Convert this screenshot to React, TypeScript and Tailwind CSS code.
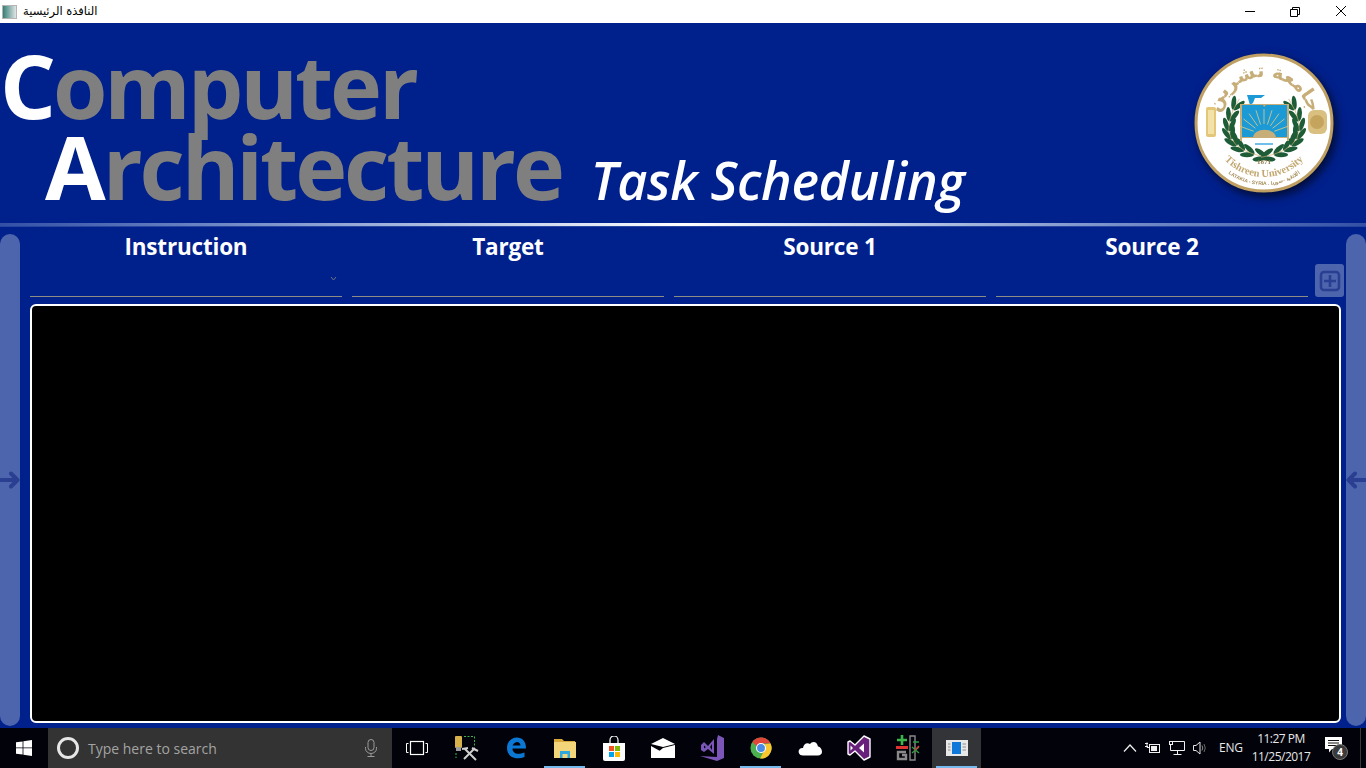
import React from "react";

const ui = { fontFamily: '"Open Sans", "Noto Sans", sans-serif' };

function branch(side: number) {
  const pts: { x: number; y: number; r: number }[] = [];
  const n = 8;
  for (let i = 0; i < n; i++) {
    const t = i / (n - 1);
    const x0 = 3, y0 = 33, cx = 50, cy = 22, x1 = 28, y1 = -18;
    const x = (1 - t) * (1 - t) * x0 + 2 * (1 - t) * t * cx + t * t * x1;
    const y = (1 - t) * (1 - t) * y0 + 2 * (1 - t) * t * cy + t * t * y1;
    const dx = 2 * (1 - t) * (cx - x0) + 2 * t * (x1 - cx);
    const dy = 2 * (1 - t) * (cy - y0) + 2 * t * (y1 - cy);
    pts.push({ x: 73 + side * x, y: 73 + y, r: (Math.atan2(dy, side * dx) * 180) / Math.PI });
  }
  return pts;
}

function Laurel({ side }: { side: number }) {
  return (
    <g>
      {branch(side).map((p, i) => (
        <g key={i} transform={`translate(${p.x} ${p.y}) rotate(${p.r})`}>
          <ellipse cx="2" cy="-2.5" rx="7" ry="2.4" transform="rotate(-22)" fill="#1d5c36" />
          <ellipse cx="2" cy="2.5" rx="7" ry="2.4" transform="rotate(22)" fill="#1d5c36" />
          <line x1="-6" y1="0" x2="7" y2="0" stroke="#c8ad72" strokeWidth="0.6" />
        </g>
      ))}
    </g>
  );
}

function Logo() {
  const rays = [-70, -52, -35, -18, 0, 18, 35, 52, 70];
  return (
    <svg width="146" height="146" viewBox="0 0 146 146" className="drop-shadow-[3px_4px_5px_rgba(0,0,0,0.65)]">
      <defs>
        <path id="arcTop" d="M27 73 A46 46 0 0 1 119 73" />
        <path id="arcBot" d="M19 73 A54 54 0 0 0 127 73" />
        <path id="arcBot2" d="M11 73 A62 62 0 0 0 135 73" />
      </defs>
      <circle cx="73" cy="73" r="68" fill="#fff" stroke="#bf9f62" strokeWidth="3" />
      <text fontFamily='"DejaVu Sans", sans-serif' fontSize="19" fontWeight="700" fill="#c7ad78">
        <textPath href="#arcTop" startOffset="50%" textAnchor="middle">جامعة تشرين</textPath>
      </text>
      <rect x="15" y="57" width="10" height="30" rx="2" fill="#e3c677" />
      <rect x="17" y="60" width="6" height="24" fill="#f3e2a8" />
      <rect x="117" y="60" width="19" height="24" rx="6" fill="#d9bf80" />
      <circle cx="126" cy="72" r="7" fill="#c5a55e" />
      <path d="M56 45 H74 L70 48 H64 L62 53 L59 55 Z" fill="#1b9ad6" />
      <Laurel side={-1} />
      <Laurel side={1} />
      <rect x="49" y="54" width="49" height="37" fill="#c7ad78" />
      <path d="M51 55 H72 L73 57 L75 55 H96 V87 H51 Z" fill="#1b9ad6" />
      <g stroke="#e9cc7d" strokeWidth="0.8">
        {rays.map((a) => (
          <line
            key={a}
            x1={73 + 11 * Math.sin((a * Math.PI) / 180)}
            y1={85 - 11 * Math.cos((a * Math.PI) / 180)}
            x2={73 + 26 * Math.sin((a * Math.PI) / 180)}
            y2={85 - 26 * Math.cos((a * Math.PI) / 180)}
          />
        ))}
      </g>
      <path d="M62 88 A11 8 0 0 1 85 88 Z" fill="#c7ad78" />
      <rect x="51" y="88" width="45" height="3" fill="#fff" />
      <rect x="64" y="93" width="18" height="2" fill="#6fbfe8" />
      <text x="73" y="114" textAnchor="middle" fontFamily='"Liberation Serif", serif' fontSize="7" fontWeight="700" fill="#8d7a4e">1871</text>
      <text fontFamily='"Liberation Serif", serif' fontSize="10.5" fontWeight="700" fill="#c2a871">
        <textPath href="#arcBot" startOffset="50%" textAnchor="middle">Tishreen University</textPath>
      </text>
      <text fontFamily='"Liberation Sans", sans-serif' fontSize="5" fontWeight="700" fill="#a58c58">
        <textPath href="#arcBot2" startOffset="50%" textAnchor="middle">LATAKIA - SYRIA . اللاذقية - سوريا</textPath>
      </text>
    </svg>
  );
}

function Field({ label, chevron }: { label: string; chevron?: boolean }) {
  return (
    <div className="w-[312px] flex flex-col">
      <div className="h-[26px] flex items-center justify-center text-white text-[22.5px] font-bold tracking-[-0.2px]">
        {label}
      </div>
      <div className="relative h-[37px] border-b border-[#8d8d85]">
        {chevron && (
          <svg width="7" height="5" viewBox="0 0 7 5" className="absolute right-[5px] top-[16px]">
            <path d="M1 1 L3.5 4 L6 1" fill="none" stroke="#6f7480" strokeWidth="1" />
          </svg>
        )}
      </div>
    </div>
  );
}

function Rail({ flip }: { flip?: boolean }) {
  return (
    <div className="w-5 shrink-0 bg-[#4d65ad] rounded-t-[10px] rounded-b-[10px] flex items-center justify-center">
      <svg width="20" height="20" viewBox="0 0 20 20" className={flip ? "rotate-180" : ""}>
        <path d="M-1 10 H17 M11 3.5 L17.5 10 L11 16.5" fill="none" stroke="#2a3f92" strokeWidth="4" strokeLinecap="round" strokeLinejoin="round" />
      </svg>
    </div>
  );
}

function TaskIcon({ children, underline, active }: { children: React.ReactNode; underline?: boolean; active?: boolean }) {
  return (
    <div className={`relative w-[49px] h-10 flex items-center justify-center ${active ? "bg-[#333438]" : ""}`}>
      {children}
      {underline && <div className="absolute left-1 right-1 bottom-0 h-0.5 bg-[#76b9ed]" />}
    </div>
  );
}

export default function App() {
  return (
    <div className="w-[1366px] h-[768px] overflow-hidden flex flex-col bg-[#00208c]" style={ui}>
      {/* title bar */}
      <div className="h-[23px] shrink-0 bg-white flex items-center">
        <div className="ml-[2px] w-[15px] h-[14px] bg-gradient-to-r from-[#2f7f78] to-[#dfe6e6] border border-[#b5b5b5]" />
        <span className="ml-[6px] text-[11.5px] text-black" style={{ fontFamily: '"DejaVu Sans", sans-serif' }} dir="rtl">
          النافذة الرئيسية
        </span>
        <div className="ml-auto pr-[2px] flex items-center text-black">
          <svg width="46" height="22" viewBox="0 0 46 22" className="-mr-px"><path d="M18 10.5 H28" stroke="#000" /></svg>
          <svg width="46" height="22" viewBox="0 0 46 22"><path d="M18.5 8.5 h7 v7 h-7 z M20.5 8.5 v-2 h7 v7 h-2" fill="none" stroke="#000" /></svg>
          <svg width="46" height="22" viewBox="0 0 46 22"><path d="M18 5 L28 15 M28 5 L18 15" stroke="#000" /></svg>
        </div>
      </div>

      {/* header */}
      <div className="h-[200px] shrink-0 relative flex">
        <div className="flex flex-col font-bold leading-[81px] text-[88px] tracking-[-3.1px] pt-[22px] text-[#7f7f7f]">
          <div className="h-[81px]"><span className="text-white">C</span>omputer</div>
          <div className="h-[81px] pl-[45px] flex items-baseline">
            <span><span className="text-white">A</span>rchitecture</span>
            <span className="ml-[29px] text-white italic text-[52px] font-semibold tracking-[-0.35px]">Task Scheduling</span>
          </div>
        </div>
        <div className="absolute left-[1191px] top-[27px]"><Logo /></div>
      </div>

      {/* separator */}
      <div className="h-[3px] shrink-0 bg-gradient-to-r from-[#3350a6] via-white to-[#3350a6]" />
      <div className="h-px shrink-0 bg-[#2a45a0]" />

      {/* main */}
      <div className="flex-1 min-h-0 flex justify-between pt-[7px] pb-[2px]">
        <Rail />
        <div className="w-[1326px] flex flex-col">
          <div className="flex items-start h-[63px] pl-[10px] gap-[10px]">
            <Field label="Instruction" chevron />
            <Field label="Target" />
            <Field label="Source 1" />
            <Field label="Source 2" />
            <div className="ml-[-3px] mt-[30px] w-[29px] h-[33px] bg-[#4d65ad] rounded-[3px] flex items-center justify-center">
              <svg width="22" height="22" viewBox="0 0 22 22">
                <rect x="2" y="2" width="18" height="18" rx="3" fill="none" stroke="#2a3f92" strokeWidth="2.6" />
                <path d="M11 5 V17 M5 11 H17" stroke="#2a3f92" strokeWidth="2.6" />
              </svg>
            </div>
          </div>
          <div className="mt-[7px] ml-[10px] w-[1311px] h-[419px] bg-black border-2 border-white rounded-[6px]" />
        </div>
        <Rail flip />
      </div>

      {/* taskbar */}
      <div className="h-10 shrink-0 bg-[#02030a] flex items-center text-white">
        <div className="w-12 h-10 flex items-center justify-center">
          <svg width="16" height="16" viewBox="0 0 16 16" fill="#fff">
            <path d="M0 2.3 L6.6 1.4 V7.5 H0 Z M7.4 1.3 L16 0 V7.5 H7.4 Z M0 8.3 H6.6 V14.6 L0 13.7 Z M7.4 8.3 H16 V16 L7.4 14.7 Z" />
          </svg>
        </div>
        <div className="w-[344px] h-10 bg-[#333333] flex items-center">
          <div className="ml-[9px] w-[22px] h-[22px] rounded-full border-[3px] border-[#e6e6e6]" />
          <span className="ml-[9px] text-[14px] text-[#a3a3a3] tracking-[0px]">Type here to search</span>
          <svg width="14" height="18" viewBox="0 0 14 18" className="ml-auto mr-[14px]" fill="none" stroke="#9a9a9a">
            <rect x="4" y="0.5" width="6" height="11" rx="3" />
            <path d="M1.5 8 V9.5 A5.5 5 0 0 0 12.5 9.5 V8 M7 14.5 V17.5 M3.5 17.5 H10.5" />
          </svg>
        </div>
        <div className="w-[50px] flex justify-center">
          <svg width="22" height="16" viewBox="0 0 22 16" fill="none" stroke="#fff">
            <rect x="4.5" y="1.5" width="13" height="13" strokeWidth="1.2" />
            <path d="M2.5 3.5 H0.5 V12.5 H2.5 M19.5 3.5 H21.5 V12.5 H19.5" />
          </svg>
        </div>
        <TaskIcon>
          <svg width="24" height="26" viewBox="0 0 24 26" fill="none">
            <rect x="0" y="1" width="7" height="12" rx="1" fill="#d7b24b" />
            <rect x="1" y="12" width="5" height="4" fill="#9c9c9c" />
            <path d="M9 1.5 H19.5 V12 M1 18 V23" stroke="#3bb54a" strokeDasharray="2 1.5" />
            <path d="M10 14 L21 25 M20 13 L9 24 M7 14 L13 13 M17 13 L23 16" stroke="#d0d0d0" strokeWidth="2" />
          </svg>
        </TaskIcon>
        <TaskIcon>
          <svg width="20" height="22" viewBox="0 0 20 22">
            <path d="M1 11 C1 4 6 0.5 11 0.5 C16 0.5 20 4 20 11.5 H6.5 C6.5 16 11 18.5 18.5 15.5 V20 C10 23.5 1 20 1 11 Z M6.5 8.5 H14.5 C14.3 5 10 3 6.5 8.5 Z" fill="#0b78d4" fillRule="evenodd" />
          </svg>
        </TaskIcon>
        <TaskIcon underline>
          <svg width="22" height="20" viewBox="0 0 22 20">
            <path d="M0 1 H8 L10 3 H21 V6 H0 Z" fill="#d9a93a" />
            <rect x="0" y="4" width="22" height="16" fill="#f4d67a" />
            <path d="M6 20 V13 H16 V20 H13.5 V16 H8.5 V20 Z" fill="#2fa8e0" />
          </svg>
        </TaskIcon>
        <TaskIcon>
          <svg width="24" height="25" viewBox="0 0 24 25">
            <path d="M8 7 V4 A4 4 0 0 1 16 4 V7" fill="none" stroke="#fff" strokeWidth="1.2" />
            <path d="M1 7 H23 V23 Q23 25 21 25 H3 Q1 25 1 23 Z" fill="#fff" />
            <rect x="7" y="10" width="5" height="5" fill="#f25022" />
            <rect x="13" y="10" width="5" height="5" fill="#7fba00" />
            <rect x="7" y="16" width="5" height="5" fill="#00a4ef" />
            <rect x="13" y="16" width="5" height="5" fill="#ffb900" />
          </svg>
        </TaskIcon>
        <TaskIcon>
          <svg width="24" height="20" viewBox="0 0 24 20">
            <path d="M0 6 L12 0 L24 6 L12 9 Z" fill="#fff" />
            <path d="M0 8 L9 13 L0 20 Z M0 20 L12 10 L24 7 V20 Z" fill="#fff" />
          </svg>
        </TaskIcon>
        <TaskIcon>
          <svg width="24" height="26" viewBox="0 0 24 26">
            <path d="M18 0 L24 3 V23 L17 26 L0 21 L17 22 V4 Z" fill="#7c55b8" />
            <path d="M1 10 L4 7 L8 11 L14 4 V19 L8 14 L4 17 L1 15 Z M4 10.5 V13.5 L6 12 Z M10 12 L12 15 V9 Z" fill="#7c55b8" fillRule="evenodd" />
          </svg>
        </TaskIcon>
        <TaskIcon underline>
          <svg width="22" height="24" viewBox="0 0 24 24">
            <circle cx="12" cy="12" r="11.5" fill="#4caf50" />
            <path d="M12 .5 A11.5 11.5 0 0 1 22.4 7 H12 A5 5 0 0 0 7.5 10 L2.5 5.5 A11.5 11.5 0 0 1 12 .5 Z" fill="#e0463a" />
            <path d="M22.4 7 A11.5 11.5 0 0 1 11 23.5 L16 14 A5 5 0 0 0 15.5 8 Z" fill="#f9c82f" />
            <circle cx="12" cy="12" r="5.5" fill="#fff" />
            <circle cx="12" cy="12" r="4.3" fill="#4a8ae8" />
          </svg>
        </TaskIcon>
        <TaskIcon>
          <svg width="24" height="16" viewBox="0 0 24 16" fill="#fff">
            <path d="M5 15.5 C1 15.5 0 12 1 10 C2 8 4 8 5 8 C5.5 4 9 2 12 4 C14 1 19 1 20 6.5 C23 7 24 10 24 12 C24 14 22 15.5 20 15.5 Z" />
          </svg>
        </TaskIcon>
        <TaskIcon>
          <svg width="24" height="26" viewBox="0 0 24 26">
            <path d="M17 1 L23 4 V22 L17 25 L8 16 L3 20 L1 19 V7 L3 6 L8 10 Z" fill="#68217a" stroke="#fff" strokeWidth="1.4" strokeLinejoin="round" />
            <path d="M17 8.5 V17.5 L12 13 Z M3.5 10.5 V15.5 L6 13 Z" fill="#fff" />
          </svg>
        </TaskIcon>
        <TaskIcon>
          <svg width="24" height="26" viewBox="0 0 24 26" fill="none">
            <path d="M6 0 V10 M1 5 H11" stroke="#3bb54a" strokeWidth="2.6" />
            <rect x="0" y="11" width="12" height="3" fill="#dd3333" />
            <path d="M10 17 H2 V24 H10 V20 H6" stroke="#8a8a8a" strokeWidth="2.4" />
            <path d="M14 1 H19 V25 H14 Z" stroke="#8a8a8a" strokeWidth="1.4" />
            <path d="M17 7 L23 7 M16 12 L23 18 M23 12 L16 18" stroke="#2f9e44" strokeWidth="1.4" />
            <path d="M19 15 L23 11" stroke="#dd3333" strokeWidth="1.4" />
          </svg>
        </TaskIcon>
        <TaskIcon underline active>
          <svg width="22" height="16" viewBox="0 0 22 16">
            <rect width="22" height="16" fill="#e8e8e8" />
            <rect x="6" y="2" width="9" height="12" fill="#1078d8" />
            <path d="M2 4 H4.5 M2 7 H4.5 M2 10 H4.5 M16.5 4 H20 M16.5 7 H20 M16.5 10 H20" stroke="#8c8c8c" />
          </svg>
        </TaskIcon>

        {/* tray */}
        <div className="ml-auto flex items-center h-10 pr-[5px]">
          <svg width="14" height="8" viewBox="0 0 14 8" fill="none" stroke="#f0f0f0" className="mr-[8px]"><path d="M1 7.5 L7 1 L13 7.5" strokeWidth="1.2" /></svg>
          <svg width="16" height="12" viewBox="0 0 16 12" fill="none" stroke="#f0f0f0" className="mr-[8px]">
            <path d="M0 1.5 H3 M0 4.5 H3 M2 .5 V5.5 H5" />
            <rect x="4.5" y="2.5" width="10" height="8" />
            <rect x="6" y="4" width="6" height="5" fill="#f0f0f0" stroke="none" />
          </svg>
          <svg width="16" height="14" viewBox="0 0 16 14" fill="none" stroke="#f0f0f0" className="mr-[8px]">
            <rect x="0.5" y="0.5" width="3" height="3" />
            <path d="M4 .5 H15.5 V9.5 H1.5 V4 M8.5 9.5 V13 M4.5 13.5 H12.5" />
          </svg>
          <svg width="15" height="14" viewBox="0 0 15 14" fill="none" stroke="#e6e6e6" className="mr-[11px]">
            <path d="M.5 4.5 H3 L7 1 V13 L3 9.5 H.5 Z" />
            <path d="M9 4.5 Q10.5 7 9 9.5" stroke="#8a8a8a" />
            <path d="M11 3 Q13.5 7 11 11" stroke="#6a6a6a" />
          </svg>
          <span className="text-[12px] text-[#e8e8e8] w-[24px] mr-[5px] tracking-[-0.2px]">ENG</span>
          <div className="w-[66px] mr-[11px] flex flex-col items-center text-[12px] text-[#e8e8e8] leading-[18px] tracking-[-0.5px]">
            <span>11:27 PM</span>
            <span>11/25/2017</span>
          </div>
          <div className="relative w-[20px] h-[18px] mr-[15px] -mt-[4px]">
            <svg width="17" height="16" viewBox="0 0 17 16">
              <path d="M0 0 H17 V12 H7 L4 15.5 V12 H0 Z" fill="#fff" />
              <path d="M3 3.5 H14 M3 6 H14 M3 8.5 H14" stroke="#111" />
            </svg>
            <div className="absolute left-[7px] top-[7px] w-4 h-4 rounded-full bg-[#3a3a3a] border border-[#777] flex items-center justify-center text-[10px] font-bold text-white">4</div>
          </div>
          <div className="w-px h-10 bg-[#3a3a3a]" />
        </div>
      </div>
    </div>
  );
}
